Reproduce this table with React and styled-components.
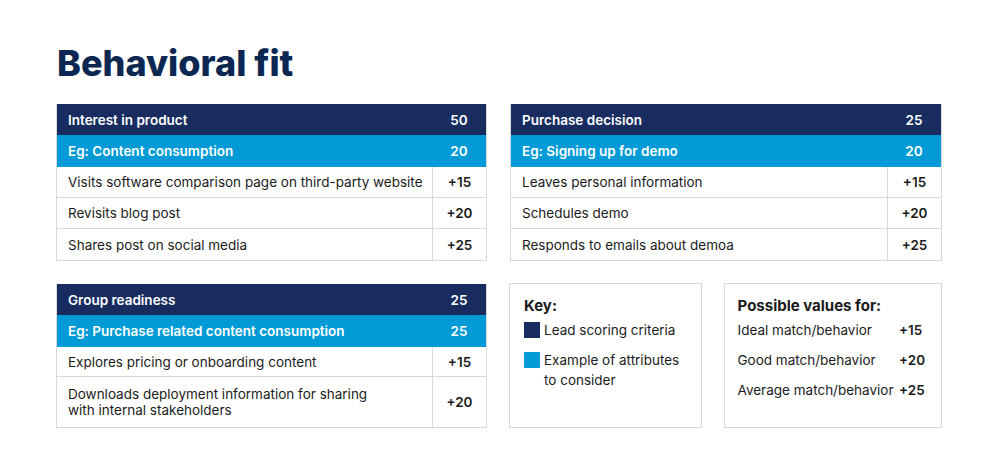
import React from "react";
import styled, { createGlobalStyle } from "styled-components";

const GlobalStyle = createGlobalStyle`
  html, body {
    margin: 0;
    padding: 0;
    background: #ffffff;
  }
  body {
    font-family: Inter, "Liberation Sans", Arial, sans-serif;
    color: #1b1b1b;
  }
`;

const Page = styled.div`
  width: 1001px;
  height: 470px;
  box-sizing: border-box;
  padding: 42px 0 0 56px;
  background: #fff;
`;

const Title = styled.h1`
  margin: 0 0 20px 1px;
  font-size: 36px;
  line-height: 42px;
  font-weight: 800;
  color: #0b2752;
`;

const Grid = styled.div`
  display: grid;
  grid-template-columns: 431px 432px;
  column-gap: 23px;
  row-gap: 23px;
  align-items: start;
`;

const Table = styled.div`
  border: 1px solid #d9d9d9;
  border-top: none;
  font-size: 13.5px;
`;

const Row = styled.div`
  box-sizing: border-box;
  display: grid;
  grid-template-columns: 1fr 54px;
  height: ${(p) => p.$h || 31}px;
  background: ${(p) =>
    p.$kind === "head" ? "#182c60" : p.$kind === "sub" ? "#009bd6" : "#fff"};
  color: ${(p) => (p.$kind ? "#fff" : "#1b1b1b")};
  font-weight: ${(p) => (p.$kind ? 600 : 400)};
  border-bottom: ${(p) => (p.$kind ? "none" : "1px solid #d9d9d9")};
  &:last-child {
    border-bottom: none;
  }
`;

const Label = styled.div`
  display: flex;
  align-items: center;
  padding-left: 11px;
  line-height: 16px;
  white-space: nowrap;
`;

const Score = styled.div`
  display: flex;
  align-items: center;
  justify-content: center;
  font-weight: 600;
  border-left: ${(p) => (p.$plain ? "none" : "1px solid #d9d9d9")};
`;

const BottomRight = styled.div`
  display: flex;
  gap: 22px;
  margin-left: -1px;
  margin-top: -1px;
`;

const Box = styled.div`
  box-sizing: border-box;
  width: ${(p) => p.$w}px;
  height: 145px;
  border: 1px solid #d9d9d9;
  padding: ${(p) => p.$pad};
  font-size: 13.5px;
  white-space: nowrap;
`;

const BoxTitle = styled.div`
  font-size: 15px;
  font-weight: 700;
  color: #1b1b1b;
  line-height: 20px;
  margin-bottom: 4px;
`;

const KeyItem = styled.div`
  display: flex;
  align-items: flex-start;
  gap: 4px;
  line-height: 20px;
  margin-bottom: 10px;
`;

const Swatch = styled.span`
  flex: none;
  width: 16px;
  height: 16px;
  margin-top: 2px;
  background: ${(p) => p.$color};
`;

const ValueRow = styled.div`
  display: flex;
  justify-content: space-between;
  line-height: 20px;
  margin-bottom: 10px;
  b {
    font-weight: 600;
    width: 28px;
  }
`;

const sections = [
  {
    title: "Interest in product",
    total: 50,
    example: "Eg: Content consumption",
    exampleScore: 20,
    rows: [
      ["Visits software comparison page on third-party website", "+15"],
      ["Revisits blog post", "+20"],
      ["Shares post on social media", "+25"],
    ],
  },
  {
    title: "Purchase decision",
    total: 25,
    example: "Eg: Signing up for demo",
    exampleScore: 20,
    rows: [
      ["Leaves personal information", "+15"],
      ["Schedules demo", "+20"],
      ["Responds to emails about demoa", "+25"],
    ],
  },
  {
    title: "Group readiness",
    total: 25,
    example: "Eg: Purchase related content consumption",
    exampleScore: 25,
    rows: [
      ["Explores pricing or onboarding content", "+15", 30],
      [
        <>
          Downloads deployment information for sharing
          <br />
          with internal stakeholders
        </>,
        "+20",
        50,
      ],
    ],
  },
];

function ScoreTable({ s }) {
  return (
    <Table>
      <Row $kind="head">
        <Label>{s.title}</Label>
        <Score $plain>{s.total}</Score>
      </Row>
      <Row $kind="sub" $h={32}>
        <Label>{s.example}</Label>
        <Score $plain>{s.exampleScore}</Score>
      </Row>
      {s.rows.map(([label, pts, h], i) => (
        <Row key={i} $h={h}>
          <Label>{label}</Label>
          <Score>{pts}</Score>
        </Row>
      ))}
    </Table>
  );
}

export default function App() {
  return (
    <Page>
      <GlobalStyle />
      <Title>Behavioral fit</Title>
      <Grid>
        <ScoreTable s={sections[0]} />
        <ScoreTable s={sections[1]} />
        <ScoreTable s={sections[2]} />
        <BottomRight>
          <Box $w={193} $pad="12px 14px">
            <BoxTitle>Key:</BoxTitle>
            <KeyItem>
              <Swatch $color="#182c60" />
              Lead scoring criteria
            </KeyItem>
            <KeyItem>
              <Swatch $color="#009bd6" />
              <span>
                Example of attributes
                <br />
                to consider
              </span>
            </KeyItem>
          </Box>
          <Box $w={219} $pad="12px 14px 12px 13px">
            <BoxTitle>Possible values for:</BoxTitle>
            <ValueRow>
              <span>Ideal match/behavior</span>
              <b>+15</b>
            </ValueRow>
            <ValueRow>
              <span>Good match/behavior</span>
              <b>+20</b>
            </ValueRow>
            <ValueRow>
              <span>Average match/behavior</span>
              <b>+25</b>
            </ValueRow>
          </Box>
        </BottomRight>
      </Grid>
    </Page>
  );
}
